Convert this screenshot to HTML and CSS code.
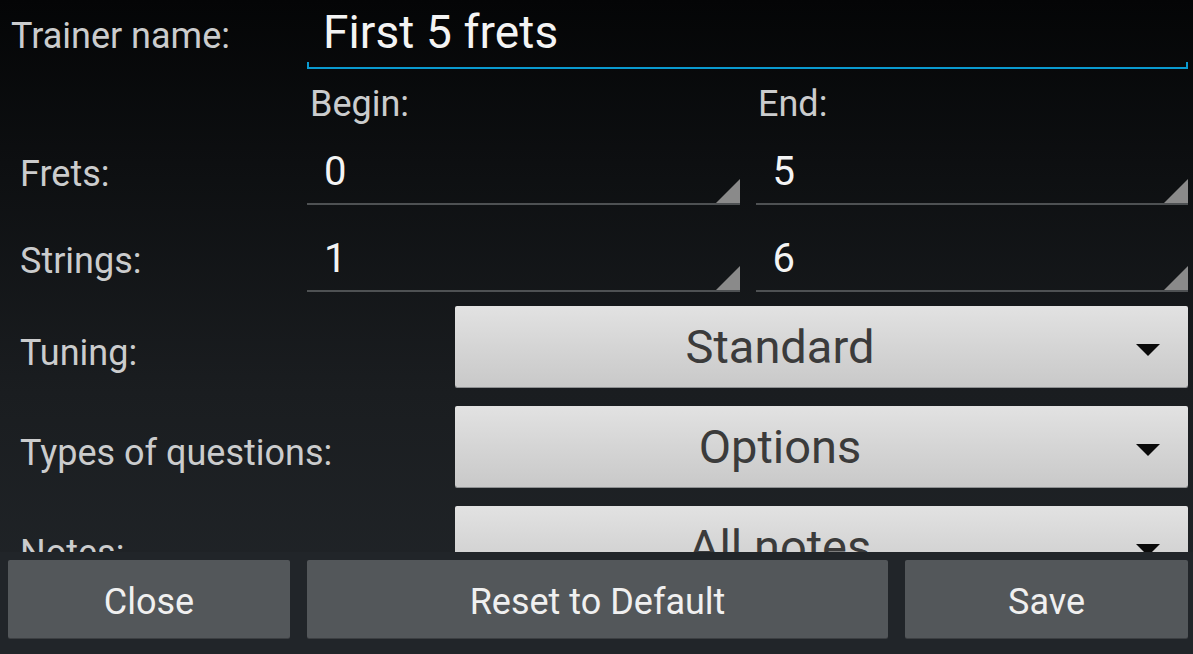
FILE: index.html
```html
<!DOCTYPE html>
<html>
<head>
<meta charset="utf-8">
<link rel="stylesheet" href="styles.css">
</head>
<body>
<div class="screen">
  <div class="form">
    <div class="row row-name">
      <div class="label label-name">Trainer name:</div>
      <div class="name-edit"><span class="name-text">First 5 frets</span></div>
    </div>
    <div class="row row-heads">
      <div class="label-spacer"></div>
      <div class="head">Begin:</div>
      <div class="head">End:</div>
    </div>
    <div class="row row-edit">
      <div class="label">Frets:</div>
      <div class="num-edit"><span class="num">0</span><span class="corner"></span></div>
      <div class="num-edit"><span class="num">5</span><span class="corner"></span></div>
    </div>
    <div class="row row-edit">
      <div class="label">Strings:</div>
      <div class="num-edit"><span class="num">1</span><span class="corner"></span></div>
      <div class="num-edit"><span class="num">6</span><span class="corner"></span></div>
    </div>
    <div class="row row-spin">
      <div class="label">Tuning:</div>
      <div class="spinner"><span class="spin-text">Standard</span><span class="arrow"></span></div>
    </div>
    <div class="row row-spin">
      <div class="label">Types of questions:</div>
      <div class="spinner"><span class="spin-text">Options</span><span class="arrow"></span></div>
    </div>
    <div class="row row-spin">
      <div class="label">Notes:</div>
      <div class="spinner"><span class="spin-text">All notes</span><span class="arrow"></span></div>
    </div>
  </div>
  <div class="bar">
    <div class="btn btn-close">Close</div>
    <div class="btn btn-reset">Reset to Default</div>
    <div class="btn btn-save">Save</div>
  </div>
</div>
</body>
</html>
```
FILE: styles.css
```css
html, body {
  margin: 0;
  padding: 0;
  background: #212529;
}
.screen {
  width: 1193px;
  height: 654px;
  overflow: hidden;
  display: flex;
  flex-direction: column;
  font-family: Roboto, "Liberation Sans", sans-serif;
  background: linear-gradient(180deg, #040506 0%, #0d0f11 25%, #1a1d20 60%, #22262a 100%);
}
.form {
  height: 552px;
  overflow: hidden;
  flex: none;
}
.row {
  display: flex;
  align-items: center;
  padding-right: 5px;
}
.label {
  width: 287px;
  padding-left: 20px;
  flex: none;
  color: #cbcccd;
  font-size: 36px;
}
.label-name {
  padding-left: 11px;
  width: 296px;
}
.row-name {
  height: 76px;
  align-items: flex-start;
}
.row-name .label {
  padding-top: 15px;
}
.name-edit {
  flex: 1;
  height: 69px;
  position: relative;
  border-bottom: 2px solid #0a9ad0;
  box-sizing: border-box;
}
.name-edit::before,
.name-edit::after {
  content: "";
  position: absolute;
  bottom: -2px;
  width: 2px;
  height: 7px;
  background: #0a9ad0;
}
.name-edit::before { left: 0; }
.name-edit::after { right: 0; }
.name-text {
  display: block;
  padding-left: 16px;
  padding-top: 5px;
  color: #f4f4f4;
  font-size: 46px;
  letter-spacing: 0.1px;
}
.row-heads {
  height: 56px;
  align-items: center;
}
.label-spacer {
  width: 307px;
  flex: none;
}
.head {
  flex: 1;
  color: #cbcccd;
  font-size: 36px;
  padding-left: 3px;
}
.head + .head {
  margin-left: 16px;
  padding-left: 2px;
}
.row-edit {
  height: 87px;
  gap: 16px;
  align-items: stretch;
}
.row-edit .label {
  display: flex;
  align-items: center;
  padding-bottom: 4px;
  margin-right: -16px;
}
.num-edit {
  flex: 1;
  position: relative;
  display: flex;
  align-items: center;
  border-bottom: 2px solid #4e5153;
  margin-bottom: 14px;
}
.num {
  padding-left: 17px;
  padding-top: 8px;
  color: #f4f4f4;
  font-size: 40px;
}
.corner {
  position: absolute;
  right: 0;
  bottom: 0;
  width: 0;
  height: 0;
  border-left: 24px solid transparent;
  border-bottom: 24px solid #8a8a8a;
}
.row-spin {
  height: 100px;
  align-items: flex-start;
}
.row-spin .label {
  width: 435px;
  padding-top: 26px;
}
.spinner {
  flex: 1;
  height: 81px;
  position: relative;
  display: flex;
  align-items: center;
  justify-content: center;
  background: linear-gradient(180deg, #e2e2e2 0%, #d5d5d5 50%, #c9c9c9 100%);
  border-radius: 2px;
  box-shadow: 0 1px 0 #8e9092;
}
.spin-text {
  color: #3b3b3b;
  font-size: 47px;
  margin-right: 83px;
  padding-bottom: 0;
}
.arrow {
  position: absolute;
  right: 28px;
  top: 38px;
  width: 0;
  height: 0;
  border-left: 12px solid transparent;
  border-right: 12px solid transparent;
  border-top: 12px solid #0a0a0a;
}
.bar {
  flex: 1;
  display: flex;
  gap: 17px;
  padding: 8px 5px 16px 8px;
  background: #212529;
}
.btn {
  height: 78px;
  box-sizing: border-box;
  padding-top: 5px;
  display: flex;
  align-items: center;
  justify-content: center;
  background: #53575a;
  border-radius: 2px;
  color: #f0f0f0;
  font-size: 36px;
  box-shadow: 0 1px 0 #3c3f42;
}
.btn-close { width: 282px; }
.btn-reset { width: 581px; }
.btn-save { width: 283px; }
```
